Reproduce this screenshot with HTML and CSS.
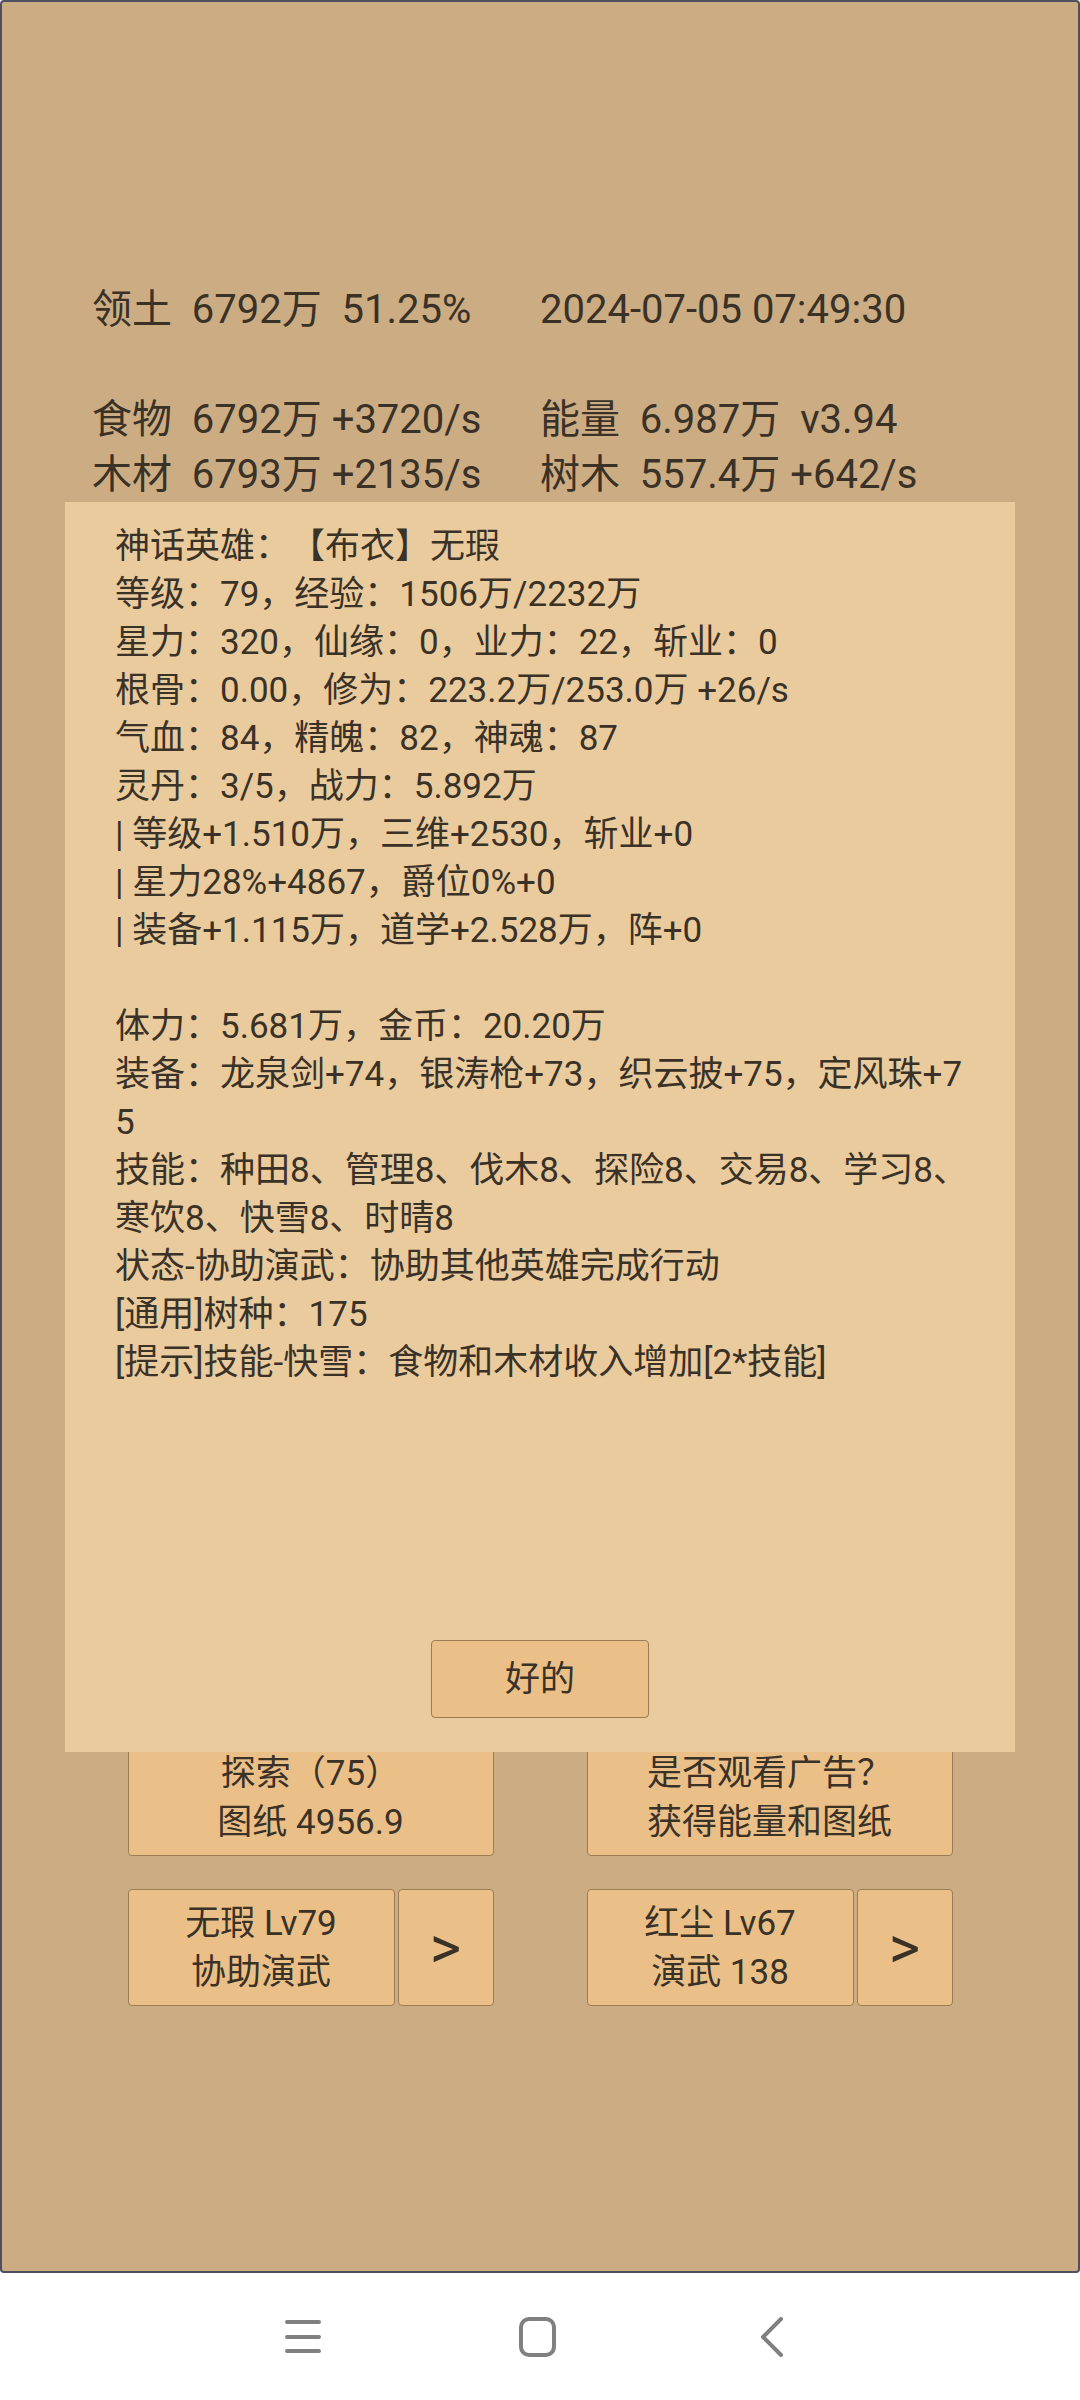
FILE: index.html
```html
<!DOCTYPE html>
<html lang="zh">

<head>
    <meta charset="UTF-8">
    <meta name="viewport" content="width=device-width, initial-scale=1.0">
    <title>领土</title>
    <link rel="stylesheet" href="styles.css">
</head>

<body>
    <div class="screen">
        <div class="game">
            <div class="stats">
                <div class="cell">领土  6792万  51.25%</div>
                <div class="cell">2024-07-05 07:49:30</div>
                <div class="cell"></div>
                <div class="cell"></div>
                <div class="cell">食物  6792万 +3720/s</div>
                <div class="cell">能量  6.987万  v3.94</div>
                <div class="cell">木材  6793万 +2135/s</div>
                <div class="cell">树木  557.4万 +642/s</div>
            </div>

            <div class="actions">
                <div class="action-row">
                    <div class="group">
                        <button class="btn btn-wide">探索（75）<br>图纸 4956.9</button>
                    </div>
                    <div class="group">
                        <button class="btn btn-wide">是否观看广告？<br>获得能量和图纸</button>
                    </div>
                </div>
                <div class="action-row">
                    <div class="group">
                        <button class="btn btn-hero">无瑕 Lv79<br>协助演武</button>
                        <button class="btn btn-arrow">&gt;</button>
                    </div>
                    <div class="group">
                        <button class="btn btn-hero">红尘 Lv67<br>演武 138</button>
                        <button class="btn btn-arrow">&gt;</button>
                    </div>
                </div>
            </div>

            <div class="dialog">
                <div class="dialog-text">神话英雄：【布衣】无瑕
等级：79，经验：1506万/2232万
星力：320，仙缘：0，业力：22，斩业：0
根骨：0.00，修为：223.2万/253.0万 +26/s
气血：84，精魄：82，神魂：87
灵丹：3/5，战力：5.892万
| 等级+1.510万，三维+2530，斩业+0
| 星力28%+4867，爵位0%+0
| 装备+1.115万，道学+2.528万，阵+0

体力：5.681万，金币：20.20万
装备：龙泉剑+74，银涛枪+73，织云披+75，定风珠+75
技能：种田8、管理8、伐木8、探险8、交易8、学习8、寒饮8、快雪8、时晴8
状态-协助演武：协助其他英雄完成行动
[通用]树种：175
[提示]技能-快雪：食物和木材收入增加[2*技能]</div>
                <button class="btn btn-ok">好的</button>
            </div>
        </div>

        <nav class="navbar">
            <svg class="nav-icon" width="36" height="40" viewBox="0 0 36 40">
                <path d="M2 5H34M2 20H34M2 34H34" stroke="#808080" stroke-width="4" stroke-linecap="round" fill="none" />
            </svg>
            <svg class="nav-icon" width="37" height="40" viewBox="0 0 37 40">
                <rect x="2" y="2" width="33" height="36" rx="8" stroke="#808080" stroke-width="4" fill="none" />
            </svg>
            <svg class="nav-icon" width="24" height="40" viewBox="0 0 24 40">
                <path d="M21 2L3 20L21 38" stroke="#808080" stroke-width="4" stroke-linecap="round" stroke-linejoin="round" fill="none" />
            </svg>
        </nav>
    </div>
</body>

</html>
```

FILE: styles.css
```css
body {
    margin: 0;
    background-color: #ffffff;
    font-family: Roboto, "Noto Sans CJK SC", sans-serif;
    color: #3a3127;
    text-spacing-trim: space-all;
}

.screen {
    width: 1080px;
    height: 2400px;
    display: flex;
    flex-direction: column;
}

.game {
    position: relative;
    height: 2273px;
    box-sizing: border-box;
    border: 2px solid #4d4f60;
    border-radius: 4px;
    background-color: #cbac83;
}

.stats {
    display: grid;
    grid-template-columns: 448px 448px;
    grid-auto-rows: 55px;
    padding: 280px 0 0 90px;
    font-size: 40px;
    line-height: 55px;
}

.cell {
    white-space: pre;
}

.actions {
    margin-top: 1237px;
    display: flex;
    flex-direction: column;
    gap: 33px;
}

.action-row {
    display: flex;
    justify-content: center;
    gap: 93px;
}

.group {
    width: 366px;
    display: flex;
    gap: 3px;
}

.btn {
    box-sizing: border-box;
    margin: 0;
    padding: 0;
    background-color: #ebc088;
    border: 1px solid #9c7c52;
    border-radius: 4px;
    font-family: Roboto, "Noto Sans CJK SC", sans-serif;
    font-size: 35px;
    line-height: 49px;
    color: #3a3127;
    text-spacing-trim: space-all;
}

.btn-wide {
    width: 366px;
    height: 117px;
}

.btn-hero {
    width: 267px;
    height: 117px;
}

.btn-arrow {
    width: 96px;
    height: 117px;
    font-size: 60px;
}

.dialog {
    position: absolute;
    left: 63px;
    top: 500px;
    width: 950px;
    height: 1250px;
    box-sizing: border-box;
    padding: 21px 0 34px 50px;
    background-color: #e9cb9e;
    display: flex;
    flex-direction: column;
}

.dialog-text {
    width: 860px;
    font-size: 35px;
    line-height: 48px;
    white-space: pre-wrap;
    word-break: break-all;
}

.btn-ok {
    margin: auto 0 0 316px;
    width: 218px;
    height: 78px;
}

.navbar {
    flex: 1;
    display: flex;
    align-items: center;
    padding-left: 285px;
    gap: 198px;
}

.nav-icon:last-child {
    margin-left: 6px;
}
```
